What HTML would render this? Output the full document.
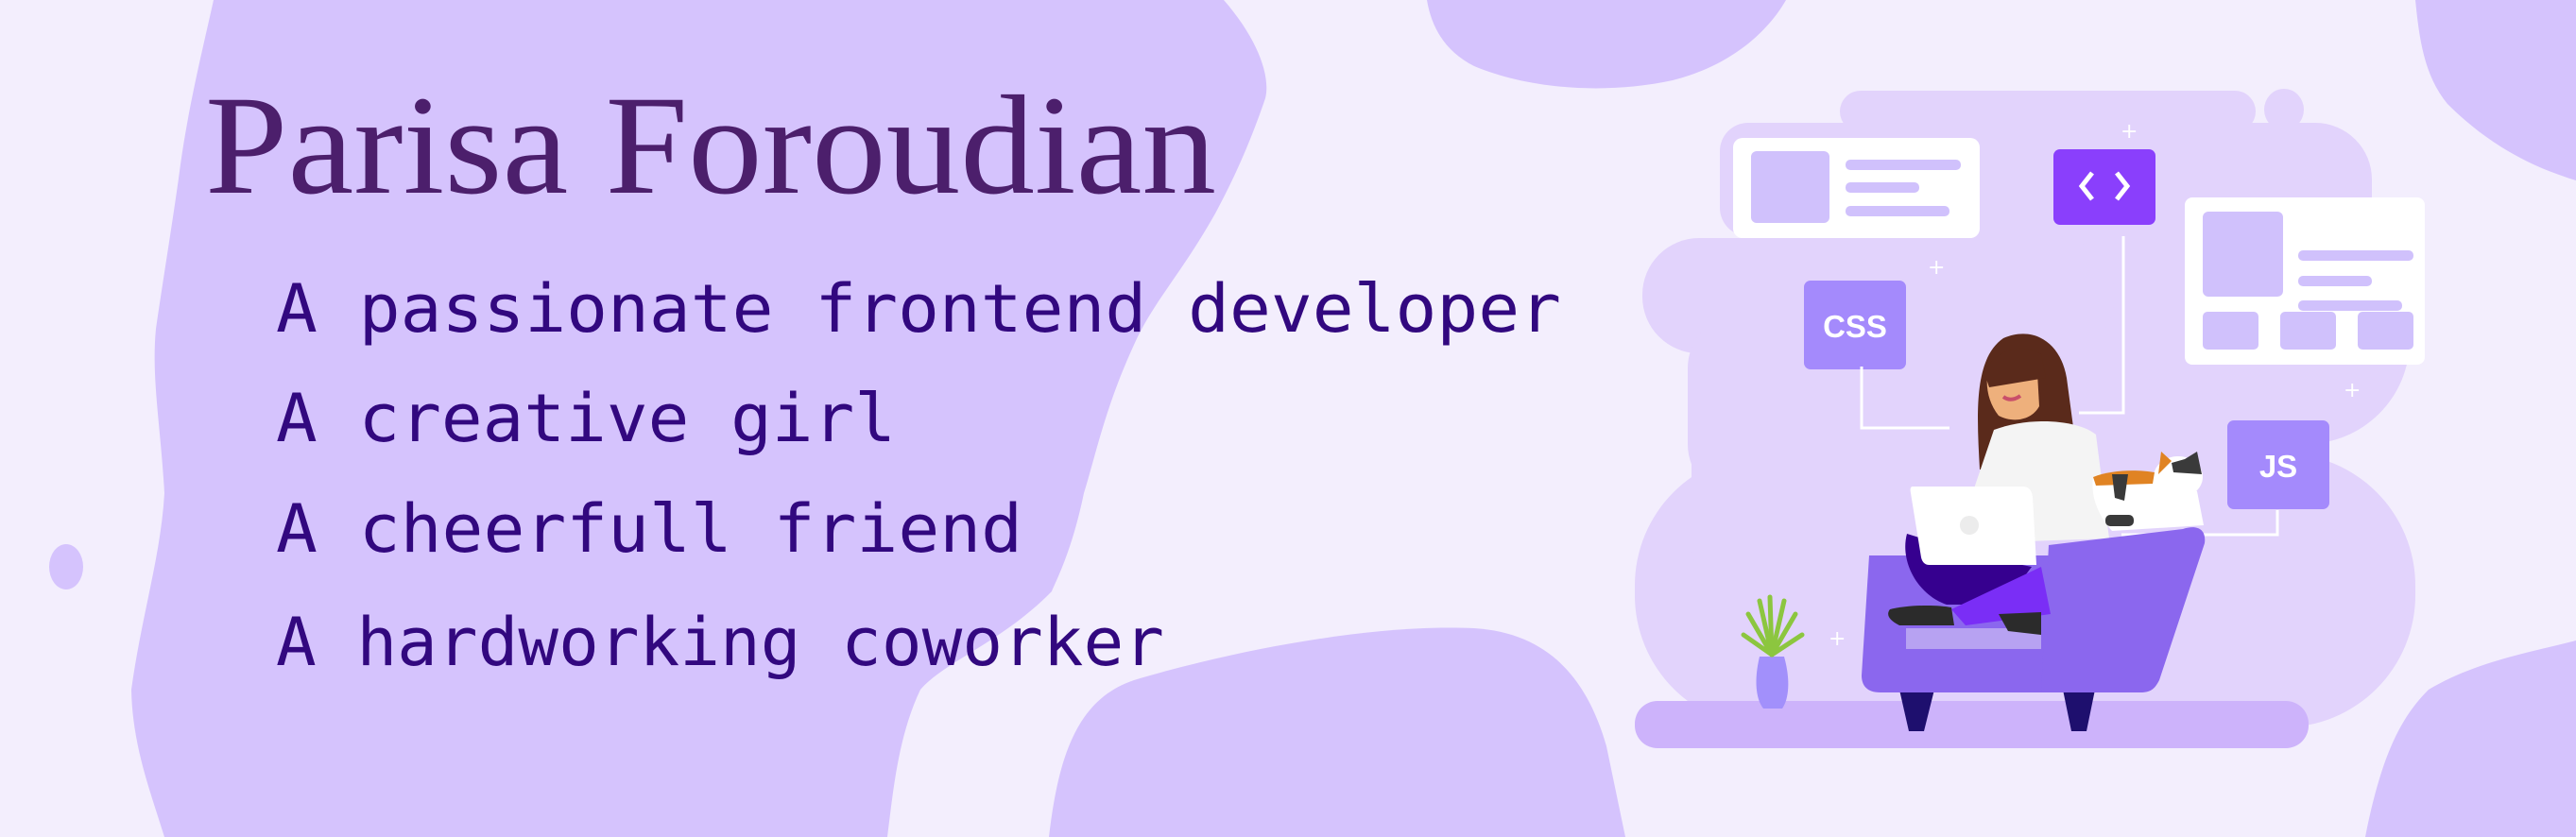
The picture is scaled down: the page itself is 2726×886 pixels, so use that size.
<!DOCTYPE html>
<html><head><meta charset="utf-8"><style>
html,body{margin:0;padding:0;background:#f3eefd;}
svg{display:block}
</style></head><body>
<svg width="2726" height="886" viewBox="0 0 2726 886" xmlns="http://www.w3.org/2000/svg">
<rect width="2726" height="886" fill="#f3eefd"/>
<g fill="#d5c3fd">
<path d="M226,0 L1295,0 C1330,40 1345,80 1339,104 C1320,160 1300,200 1286,226 C1250,290 1220,320 1200,365 C1170,430 1160,480 1147,522 C1135,580 1120,610 1113,626 C1060,680 1000,700 974,730 C950,780 945,840 939,886 L174,886 C160,840 140,790 139,730 C150,650 170,590 174,522 C170,450 160,400 165,348 C175,280 185,220 191,174 C200,110 215,50 226,0Z"/>
<path d="M1110,886 C1120,800 1140,740 1200,720 C1300,690 1450,660 1560,665 C1640,670 1680,720 1700,790 L1720,886Z"/>
<path d="M1510,0 C1515,30 1530,55 1560,70 C1620,95 1700,100 1770,85 C1830,70 1870,35 1890,0Z"/>
<path d="M2556,0 C2560,40 2565,80 2590,110 C2640,160 2690,180 2726,191 L2726,0Z"/>
<path d="M2503,886 C2520,800 2540,760 2570,730 C2620,700 2680,690 2726,678 L2726,886Z"/>
<ellipse cx="70" cy="600" rx="18" ry="24"/>
<ellipse cx="1595" cy="690" rx="20" ry="14"/>
</g>
<!-- cloud -->
<g fill="#e2d3fc">
<rect x="1947" y="96" width="440" height="44" rx="22"/>
<ellipse cx="2417" cy="116" rx="21" ry="22"/>
<rect x="1820" y="130" width="200" height="120" rx="30"/>
<rect x="1950" y="130" width="560" height="330" rx="60"/>
<rect x="1738" y="252" width="500" height="122" rx="60"/>
<rect x="1786" y="330" width="220" height="200" rx="60"/>
<rect x="1730" y="480" width="826" height="290" rx="140"/>
<rect x="1790" y="360" width="600" height="260" rx="40"/>
<circle cx="2440" cy="360" r="110"/>
</g>
<!-- floor -->
<rect x="1730" y="742" width="713" height="50" rx="24" fill="#cdb3fb"/>
<!-- card1 -->
<rect x="1834" y="146" width="261" height="106" rx="10" fill="#fff"/>
<rect x="1853" y="160" width="83" height="76" rx="6" fill="#d0c1fc"/>
<rect x="1953" y="169" width="122" height="11" rx="5" fill="#d0c1fc"/>
<rect x="1953" y="193" width="78" height="11" rx="5" fill="#d0c1fc"/>
<rect x="1953" y="218" width="110" height="11" rx="5" fill="#d0c1fc"/>
<!-- code box -->
<rect x="2173" y="158" width="108" height="80" rx="7" fill="#8a3ffc"/>
<path d="M2214,183 L2203,197 L2214,211 M2240,183 L2251,197 L2240,211" stroke="#fff" stroke-width="5" fill="none"/>
<!-- card2 -->
<rect x="2312" y="209" width="254" height="177" rx="8" fill="#fff"/>
<rect x="2331" y="224" width="85" height="90" rx="6" fill="#d0c1fc"/>
<rect x="2432" y="265" width="122" height="11" rx="5" fill="#d0c1fc"/>
<rect x="2432" y="292" width="78" height="11" rx="5" fill="#d0c1fc"/>
<rect x="2432" y="318" width="110" height="11" rx="5" fill="#d0c1fc"/>
<rect x="2331" y="330" width="59" height="40" rx="5" fill="#d0c1fc"/>
<rect x="2413" y="330" width="59" height="40" rx="5" fill="#d0c1fc"/>
<rect x="2495" y="330" width="59" height="40" rx="5" fill="#d0c1fc"/>
<!-- css / js -->
<rect x="1909" y="297" width="108" height="94" rx="7" fill="#a48afc"/>
<text x="1963" y="357" font-family="Liberation Sans, sans-serif" font-weight="bold" font-size="33" fill="#fff" text-anchor="middle">CSS</text>
<rect x="2357" y="445" width="108" height="94" rx="7" fill="#a48afc"/>
<text x="2411" y="505" font-family="Liberation Sans, sans-serif" font-weight="bold" font-size="33" fill="#fff" text-anchor="middle">JS</text>
<!-- lines -->
<g stroke="#fff" stroke-width="3" fill="none">
<path d="M1970,388 L1970,453 L2063,453"/>
<path d="M2247,250 L2247,437 L2200,437"/>
<path d="M2245,566 L2410,566 L2410,540"/>
</g>
<g fill="#fff" font-family="DejaVu Sans" font-size="22"><text x="2244" y="146">+</text><text x="2040" y="290">+</text><text x="2480" y="420">+</text><text x="1935" y="683">+</text></g>
<!-- chair legs -->
<path d="M2010,730 L2047,730 L2036,774 L2020,774Z" fill="#1e0f6e"/>
<path d="M2183,730 L2217,730 L2208,774 L2192,774Z" fill="#1e0f6e"/>
<!-- hair back -->
<path d="M2120,358 C2150,345 2180,360 2187,400 L2200,497 L2095,497 C2092,440 2088,380 2120,358Z" fill="#5a2a1b"/>
<!-- sweater -->
<path d="M2110,455 C2150,440 2200,445 2218,460 L2232,570 L2085,575 L2088,520 Z" fill="#f4f4f4"/>
<!-- cat -->
<path d="M2215,505 C2240,495 2275,498 2290,505 L2325,520 L2332,556 L2235,562 C2220,545 2212,525 2215,505Z" fill="#fff"/>
<ellipse cx="2305" cy="505" rx="26" ry="22" fill="#fff"/>
<path d="M2215,505 C2235,497 2262,497 2280,500 L2278,512 L2218,514Z" fill="#e08323"/>
<path d="M2235,502 L2252,502 L2248,530 L2238,527Z" fill="#3a3a3a"/>
<path d="M2284,502 L2287,478 L2298,488 Z" fill="#e08323"/>
<path d="M2298,490 L2312,486 L2325,478 L2330,502 L2300,500 Z" fill="#3a3a3a"/>
<rect x="2228" y="545" width="30" height="12" rx="5" fill="#3a3a3a"/>
<!-- chair -->
<path d="M1978,588 L2170,588 L2178,720 C2178,730 2170,733 2160,733 L1990,733 C1975,733 1970,725 1970,715Z" fill="#8b67ee"/>
<path d="M2168,577 L2310,560 C2325,555 2335,560 2333,575 L2285,720 C2280,730 2275,733 2265,733 L2160,733 Z" fill="#8b67ee"/>
<rect x="2017" y="665" width="143" height="22" fill="#b7a2f2"/>
<!-- legs -->
<path d="M2018,565 C2010,595 2030,630 2060,640 L2120,640 L2150,600 L2100,590 Z" fill="#36008f"/>
<path d="M2065,645 L2160,600 L2170,650 L2080,662Z" fill="#7a2ef6"/>
<path d="M2000,645 C2020,640 2050,640 2065,643 L2068,662 L2010,662 C1998,656 1996,650 2000,645Z" fill="#2b2b2b"/>
<path d="M2115,650 L2160,648 L2160,672 L2125,668Z" fill="#2b2b2b"/>
<!-- laptop -->
<path d="M2024,515 L2140,515 C2148,515 2150,520 2151,526 L2155,598 L2042,598 C2036,598 2034,594 2033,590 L2022,522 C2021,517 2022,515 2024,515Z" fill="#fff"/>
<circle cx="2084" cy="556" r="10" fill="#ececec"/>
<!-- face -->
<path d="M2105,388 C2120,378 2145,380 2156,395 L2158,430 C2150,445 2130,448 2115,440 C2103,425 2100,405 2105,388Z" fill="#eeb07c"/>
<path d="M2100,395 C2110,370 2140,362 2160,375 L2165,400 L2105,410Z" fill="#5a2a1b"/>
<path d="M2120,420 Q2128,426 2138,419" stroke="#c94f6a" stroke-width="4" fill="none"/>
<!-- plant -->
<path d="M1862,695 L1888,695 C1895,720 1893,740 1886,750 L1866,750 C1858,740 1856,720 1862,695Z" fill="#a290fb"/>
<g stroke="#8cc63f" stroke-width="5" fill="none" stroke-linecap="round"><path d="M1875,693 L1873,632"/><path d="M1875,693 L1850,650"/><path d="M1875,693 L1900,650"/><path d="M1875,693 L1845,672"/><path d="M1875,693 L1907,672"/><path d="M1875,693 L1862,636"/><path d="M1875,693 L1888,636"/></g>
<!-- text -->
<text x="217" y="204" font-family="Liberation Serif, serif" font-size="150" fill="#4c1f6c" textLength="1070" lengthAdjust="spacingAndGlyphs">Parisa Foroudian</text>
<g font-family="DejaVu Sans Mono, Liberation Mono, monospace" font-size="70" fill="#32087f">
<text x="292" y="351" textLength="1360" lengthAdjust="spacingAndGlyphs">A passionate frontend developer</text>
<text x="292" y="467" textLength="656" lengthAdjust="spacingAndGlyphs">A creative girl</text>
<text x="292" y="584" textLength="790" lengthAdjust="spacingAndGlyphs">A cheerfull friend</text>
<text x="292" y="704" textLength="940" lengthAdjust="spacingAndGlyphs">A hardworking coworker</text>
</g>
</svg>
</body></html>
